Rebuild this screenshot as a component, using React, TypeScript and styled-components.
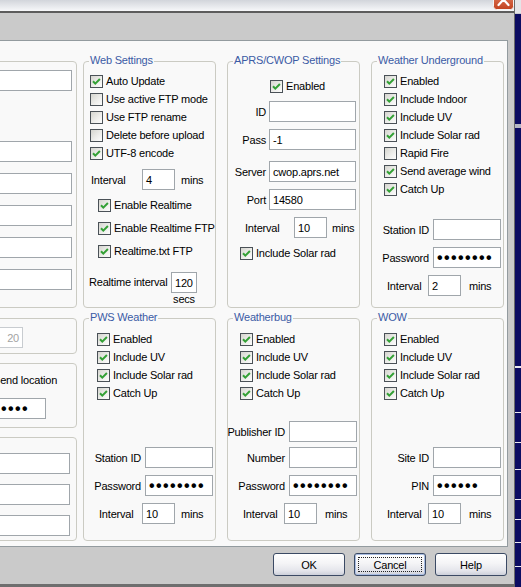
import React from "react";
import styled, { createGlobalStyle, css } from "styled-components";

const PAGE_BG = "#f9f9f9";

const GlobalStyle = createGlobalStyle`
  html, body { margin: 0; padding: 0; }
  body {
    overflow: hidden;
    background: #0c0c62;
    font-family: "Liberation Sans", Arial, sans-serif;
    font-size: 11px;
    letter-spacing: -0.2px;
    color: #000;
  }
`;

const Screen = styled.div`
  display: flex;
  width: 521px;
  height: 587px;
  overflow: hidden;
`;

const Dialog = styled.div`
  flex: none;
  box-sizing: border-box;
  width: 545px;
  height: 587px;
  margin-left: -30px;
  display: flex;
  flex-direction: column;
  background: #cacaca;
  border-right: 1px solid #6a6a6a;
  border-bottom: 3px solid #6e6e6e;
`;

const TitleBar = styled.div`
  flex: none;
  height: 11px;
  display: flex;
  justify-content: flex-end;
  background: linear-gradient(#d2d5db, #f7f8fa);
  border-bottom: 2px solid #5c5c5c;
`;

const CloseSvg = styled.svg`
  flex: none;
  margin-top: -11px;
`;

const Face = styled.div`
  flex: 1;
  display: flex;
  flex-direction: column;
  padding: 27px 6px 0 0;
`;

const Page = styled.div`
  flex: none;
  display: flex;
  gap: 6px;
  padding: 20px 3px 5px 0;
  background: ${PAGE_BG};
  border: 1px solid #939b9f;
`;

const LeftColumn = styled.div`
  flex: none;
  width: 106px;
  display: flex;
  flex-direction: column;
`;

const Grid = styled.div`
  flex: none;
  display: grid;
  grid-template-columns: repeat(3, 133px);
  grid-template-rows: 247px 223px;
  gap: 10px 11px;
`;

const GroupBox = styled.div<{ $h?: number; $pad?: string; $align?: string; $mt?: number }>`
  box-sizing: border-box;
  display: flex;
  flex-direction: column;
  align-items: ${(p) => p.$align ?? "stretch"};
  border: 1px solid #cbcbc3;
  border-radius: 4px;
  padding: ${(p) => p.$pad ?? "0"};
  margin-top: ${(p) => p.$mt ?? 0}px;
  ${(p) =>
    p.$h !== undefined &&
    css`
      flex: none;
      height: ${p.$h}px;
    `}
`;

const Legend = styled.div`
  flex: none;
  align-self: flex-start;
  margin: -8px 0 0 5px;
  padding: 0 1px;
  height: 13px;
  line-height: 13px;
  background: ${PAGE_BG};
  color: #3b5ba5;
  white-space: nowrap;
`;

const Spacer = styled.div<{ $h: number }>`
  flex: none;
  height: ${(p) => p.$h}px;
`;

const CheckRowEl = styled.div<{ $h: number; $indent: number }>`
  flex: none;
  display: flex;
  align-items: flex-start;
  height: ${(p) => p.$h}px;
  padding-left: ${(p) => p.$indent}px;
  white-space: nowrap;
`;

const BoxEl = styled.span`
  box-sizing: border-box;
  flex: none;
  width: 13px;
  height: 13px;
  margin-top: 2px;
  border: 1px solid #4a5157;
  background: linear-gradient(135deg, #d5d5cf 0%, #ededea 55%, #fdfdfd 100%);
  display: flex;
  align-items: center;
  justify-content: center;
`;

const CheckText = styled.span`
  margin-left: 3px;
  line-height: 17px;
`;

const Edit = styled.div<{ $w?: number; $disabled?: boolean; $end?: boolean; $right?: boolean }>`
  box-sizing: border-box;
  flex: none;
  ${(p) => p.$w !== undefined && css`width: ${p.$w}px;`}
  ${(p) => p.$end && css`align-self: flex-end;`}
  height: 21px;
  display: flex;
  align-items: center;
  justify-content: ${(p) => (p.$right ? "flex-end" : "flex-start")};
  padding: 0 3px;
  border: 1px solid ${(p) => (p.$disabled ? "#c8ccd0" : "#a0a6ab")};
  background: #fff;
  color: ${(p) => (p.$disabled ? "#a3a3a3" : "#000")};
  white-space: nowrap;
  overflow: hidden;
`;

const Dots = styled.span`
  font-size: 16px;
  font-weight: bold;
  letter-spacing: 1.4px;
  line-height: 19px;
`;

const FieldRow = styled.div`
  flex: none;
  display: flex;
  align-items: center;
  height: 21px;
`;

const FieldLabel = styled.span<{ $w: number; $gap: number }>`
  flex: none;
  width: ${(p) => p.$w}px;
  margin-right: ${(p) => p.$gap}px;
  display: flex;
  justify-content: flex-end;
  white-space: nowrap;
`;

const UnitRow = styled.div<{ $indent: number }>`
  flex: none;
  display: flex;
  align-items: center;
  height: 21px;
  padding-left: ${(p) => p.$indent}px;
  white-space: nowrap;
`;

const UnitLabel = styled.span<{ $w: number }>`
  flex: none;
  width: ${(p) => p.$w}px;
  white-space: nowrap;
`;

const Unit = styled.span<{ $gap: number }>`
  margin-left: ${(p) => p.$gap}px;
`;

const StackRow = styled.div<{ $indent: number }>`
  flex: none;
  display: flex;
  align-items: flex-start;
  padding-left: ${(p) => p.$indent}px;
`;

const StackLabel = styled.span<{ $w: number }>`
  flex: none;
  width: ${(p) => p.$w}px;
  line-height: 21px;
  white-space: nowrap;
`;

const StackCol = styled.div`
  display: flex;
  flex-direction: column;
  align-items: stretch;
`;

const UnitBelow = styled.span`
  line-height: 13px;
  text-align: center;
`;

const ButtonBar = styled.div`
  flex: none;
  display: flex;
  justify-content: flex-end;
  gap: 9px;
  padding: 6px 1px 8px 0;
`;

const Button = styled.div<{ $focused?: boolean }>`
  position: relative;
  box-sizing: border-box;
  width: 72px;
  height: 23px;
  display: flex;
  align-items: center;
  justify-content: center;
  border: 1px solid #3b4a64;
  border-radius: 3px;
  background: linear-gradient(#ffffff 0%, #f4f4f6 45%, #e4e5eb 80%, #cdd0da 100%);
  ${(p) =>
    p.$focused &&
    css`
      box-shadow: inset 0 0 0 1px #a9bde2;
      &::after {
        content: "";
        position: absolute;
        inset: 3px;
        border: 1px dotted #222;
      }
    `}
`;

const Desktop = styled.div`
  flex: none;
  width: 6px;
  height: 587px;
  background: linear-gradient(
    to bottom,
    #e4e5e8 0 13px,
    #c9cad0 13px 14px,
    #0c0c62 14px 124px,
    #b5b7c6 124px 128px,
    #0c0c62 128px 366px,
    #e8e8f0 366px 368px,
    #0c0c62 368px 412px,
    #e8e8f0 412px 413px,
    #0c0c62 413px 442px,
    #e8e8f0 442px 443px,
    #0c0c62 443px 469px,
    #e8e8f0 469px 470px,
    #0c0c62 470px 499px,
    #e8e8f0 499px 500px,
    #0c0c62 500px 519px,
    #e8e8f0 519px 520px,
    #0c0c62 520px 542px,
    #e8e8f0 542px 543px,
    #0c0c62 543px 566px,
    #e8e8f0 566px 567px,
    #0c0c62 567px
  );
`;

function CloseButton() {
  return (
    <CloseSvg width="21" height="21" viewBox="0 0 21 21">
      <defs>
        <linearGradient id="closeGrad" x1="0" y1="0" x2="0" y2="1">
          <stop offset="0" stopColor="#e88a6d" />
          <stop offset="1" stopColor="#c2421f" />
        </linearGradient>
      </defs>
      <rect x="0.5" y="0.5" width="20" height="20" rx="3" fill="url(#closeGrad)" stroke="#f4f4f4" />
      <path d="M5.5 5 L15.5 16 M15.5 5 L5.5 16" stroke="#ffffff" strokeWidth="2.2" strokeLinecap="round" />
    </CloseSvg>
  );
}

function CheckMark() {
  return (
    <svg width="11" height="11" viewBox="0 0 11 11">
      <path d="M2 5.2 L4.3 7.6 L8.9 3" fill="none" stroke="#33a035" strokeWidth="2" />
    </svg>
  );
}

function Check({
  label,
  checked = true,
  h = 18,
  indent,
}: {
  label: string;
  checked?: boolean;
  h?: number;
  indent: number;
}) {
  return (
    <CheckRowEl $h={h} $indent={indent}>
      <BoxEl>{checked && <CheckMark />}</BoxEl>
      <CheckText>{label}</CheckText>
    </CheckRowEl>
  );
}

function Value({ value, dots }: { value?: string; dots?: number }) {
  if (dots) return <Dots>{"•".repeat(dots)}</Dots>;
  return <>{value ?? ""}</>;
}

function Field({
  label,
  value,
  dots,
  lw = 57,
  gap = 4,
  iw = 68,
}: {
  label: string;
  value?: string;
  dots?: number;
  lw?: number;
  gap?: number;
  iw?: number;
}) {
  return (
    <FieldRow>
      <FieldLabel $w={lw} $gap={gap}>
        {label}
      </FieldLabel>
      <Edit $w={iw}>
        <Value value={value} dots={dots} />
      </Edit>
    </FieldRow>
  );
}

function Interval({
  indent,
  lw,
  value,
  gap,
}: {
  indent: number;
  lw: number;
  value: string;
  gap: number;
}) {
  return (
    <UnitRow $indent={indent}>
      <UnitLabel $w={lw}>Interval</UnitLabel>
      <Edit $w={33}>{value}</Edit>
      <Unit $gap={gap}>mins</Unit>
    </UnitRow>
  );
}

export default function App() {
  return (
    <>
      <GlobalStyle />
      <Screen>
        <Dialog>
          <TitleBar>
            <CloseButton />
          </TitleBar>
          <Face>
            <Page>
              <LeftColumn>
                <GroupBox $h={247} $pad="8px 4px 0 10px">
                  <Edit />
                  <Spacer $h={50} />
                  <Edit />
                  <Spacer $h={11} />
                  <Edit />
                  <Spacer $h={11} />
                  <Edit />
                  <Spacer $h={11} />
                  <Edit />
                  <Spacer $h={11} />
                  <Edit />
                </GroupBox>
                <GroupBox $h={36} $mt={10} $pad="8px 53px 0 0" $align="flex-end">
                  <Edit $w={40} $disabled $right>
                    20
                  </Edit>
                </GroupBox>
                <GroupBox $h={65} $mt={9} $pad="8px 30px 0 0">
                  <Check indent={5} label="Send location" />
                  <Spacer $h={8} />
                  <Edit $w={70} $end>
                    <Dots>{"•".repeat(7)}</Dots>
                  </Edit>
                </GroupBox>
                <GroupBox $h={104} $mt={9} $pad="15px 6px 0 10px">
                  <Edit />
                  <Spacer $h={10} />
                  <Edit />
                  <Spacer $h={10} />
                  <Edit />
                </GroupBox>
              </LeftColumn>

              <Grid>
                <GroupBox>
                  <Legend>Web Settings</Legend>
                  <Spacer $h={6} />
                  <Check indent={6} label="Auto Update" />
                  <Check indent={6} label="Use active FTP mode" checked={false} />
                  <Check indent={6} label="Use FTP rename" checked={false} />
                  <Check indent={6} label="Delete before upload" checked={false} />
                  <Check indent={6} label="UTF-8 encode" />
                  <Spacer $h={6} />
                  <Interval indent={7} lw={51} value="4" gap={6} />
                  <Spacer $h={7} />
                  <Check indent={14} h={23} label="Enable Realtime" />
                  <Check indent={14} h={23} label="Enable Realtime FTP" />
                  <Check indent={14} h={23} label="Realtime.txt FTP" />
                  <Spacer $h={6} />
                  <StackRow $indent={5}>
                    <StackLabel $w={82}>Realtime interval</StackLabel>
                    <StackCol>
                      <Edit $w={26}>120</Edit>
                      <UnitBelow>secs</UnitBelow>
                    </StackCol>
                  </StackRow>
                </GroupBox>

                <GroupBox>
                  <Legend>APRS/CWOP Settings</Legend>
                  <Spacer $h={11} />
                  <Check indent={42} label="Enabled" />
                  <Spacer $h={5} />
                  <Field lw={38} gap={3} iw={87} label="ID" />
                  <Spacer $h={7} />
                  <Field lw={38} gap={3} iw={87} label="Pass" value="-1" />
                  <Spacer $h={11} />
                  <Field lw={38} gap={3} iw={87} label="Server" value="cwop.aprs.net" />
                  <Spacer $h={7} />
                  <Field lw={38} gap={3} iw={87} label="Port" value="14580" />
                  <Spacer $h={7} />
                  <Interval indent={17} lw={49} value="10" gap={5} />
                  <Spacer $h={7} />
                  <Check indent={12} label="Include Solar rad" />
                </GroupBox>

                <GroupBox>
                  <Legend>Weather Underground</Legend>
                  <Spacer $h={6} />
                  <Check indent={12} label="Enabled" />
                  <Check indent={12} label="Include Indoor" />
                  <Check indent={12} label="Include UV" />
                  <Check indent={12} label="Include Solar rad" />
                  <Check indent={12} label="Rapid Fire" checked={false} />
                  <Check indent={12} label="Send average wind" />
                  <Check indent={12} label="Catch Up" />
                  <Spacer $h={20} />
                  <Field label="Station ID" />
                  <Spacer $h={7} />
                  <Field label="Password" dots={8} />
                  <Spacer $h={7} />
                  <Interval indent={15} lw={41} value="2" gap={8} />
                </GroupBox>

                <GroupBox>
                  <Legend>PWS Weather</Legend>
                  <Spacer $h={7} />
                  <Check indent={13} label="Enabled" />
                  <Check indent={13} label="Include UV" />
                  <Check indent={13} label="Include Solar rad" />
                  <Check indent={13} label="Catch Up" />
                  <Spacer $h={44} />
                  <Field label="Station ID" />
                  <Spacer $h={7} />
                  <Field label="Password" dots={8} />
                  <Spacer $h={7} />
                  <Interval indent={15} lw={43} value="10" gap={6} />
                </GroupBox>

                <GroupBox>
                  <Legend>Weatherbug</Legend>
                  <Spacer $h={7} />
                  <Check indent={12} label="Enabled" />
                  <Check indent={12} label="Include UV" />
                  <Check indent={12} label="Include Solar rad" />
                  <Check indent={12} label="Catch Up" />
                  <Spacer $h={18} />
                  <Field label="Publisher ID" />
                  <Spacer $h={5} />
                  <Field label="Number" />
                  <Spacer $h={7} />
                  <Field label="Password" dots={8} />
                  <Spacer $h={7} />
                  <Interval indent={15} lw={41} value="10" gap={8} />
                </GroupBox>

                <GroupBox>
                  <Legend>WOW</Legend>
                  <Spacer $h={7} />
                  <Check indent={12} label="Enabled" />
                  <Check indent={12} label="Include UV" />
                  <Check indent={12} label="Include Solar rad" />
                  <Check indent={12} label="Catch Up" />
                  <Spacer $h={44} />
                  <Field label="Site ID" />
                  <Spacer $h={7} />
                  <Field label="PIN" dots={6} />
                  <Spacer $h={7} />
                  <Interval indent={15} lw={41} value="10" gap={8} />
                </GroupBox>
              </Grid>
            </Page>
            <ButtonBar>
              <Button>OK</Button>
              <Button $focused>Cancel</Button>
              <Button>Help</Button>
            </ButtonBar>
          </Face>
        </Dialog>
        <Desktop />
      </Screen>
    </>
  );
}
